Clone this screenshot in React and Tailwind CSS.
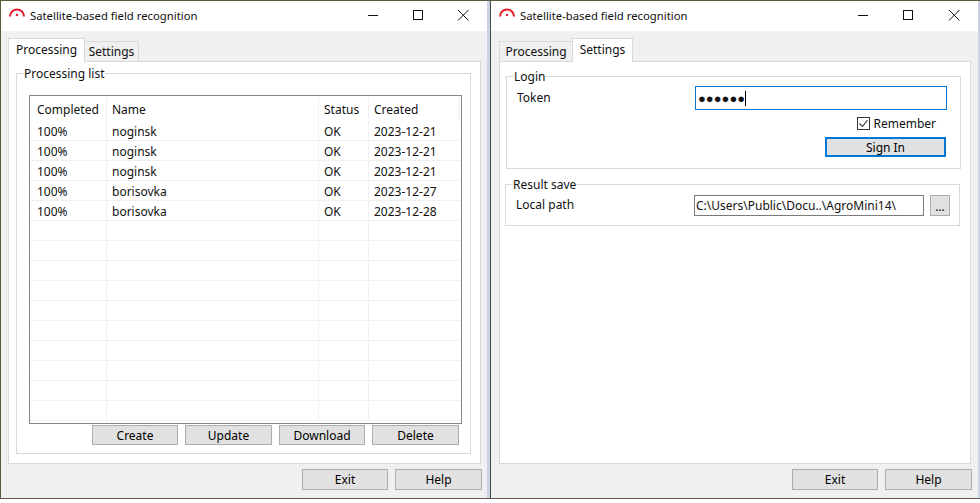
const rows = [
  ['100%', 'noginsk', 'OK', '2023-12-21'],
  ['100%', 'noginsk', 'OK', '2023-12-21'],
  ['100%', 'noginsk', 'OK', '2023-12-21'],
  ['100%', 'borisovka', 'OK', '2023-12-27'],
  ['100%', 'borisovka', 'OK', '2023-12-28'],
  ...Array(10).fill(['', '', '', '']),
];

const Btn = ({ children, className = 'border border-[#adadad]' }) => (
  <button className={`flex items-center justify-center bg-[#e1e1e1] text-[#000] ${className}`}>
    {children}
  </button>
);

const TitleBar = ({ maxGap = 'mr-[33px]' }) => (
  <div className="flex h-[30px] shrink-0 items-center bg-white pl-[8px]">
    <svg width="16" height="10" viewBox="0 0 16 10" className="mt-[-6px]" fill="none">
      <path d="M1 8.5 A7 7 0 0 1 15 8.5" stroke="#e8202c" strokeWidth="2" />
      <circle cx="8" cy="7" r="1.2" fill="#e8202c" />
    </svg>
    <span className="ml-[5px] text-[11.3px] text-[#111]">Satellite-based field recognition</span>
    <div className="ml-auto mt-[-2px] flex items-center pr-[18px]">
      <svg width="12" height="12" viewBox="0 0 12 12" className="mr-[33px]" fill="none">
        <path d="M1 6.5h10" stroke="#111" />
      </svg>
      <svg width="12" height="12" viewBox="0 0 12 12" className={maxGap} fill="none">
        <rect x="1.5" y="1.5" width="9" height="9" stroke="#111" />
      </svg>
      <svg width="12" height="12" viewBox="0 0 12 12" fill="none">
        <path d="M1 1l10.5 10.5M11.5 1L1 11.5" stroke="#111" />
      </svg>
    </div>
  </div>
);

const Tabs = ({ active }) => {
  const tab = (label, w) =>
    active === label ? (
      <div className={`relative z-10 mb-[-1px] flex h-[24px] ${w} items-center justify-center border border-b-0 border-[#d9d9d9] bg-white pb-[1px]`}>
        {label}
      </div>
    ) : (
      <div className={`flex h-[20px] ${w} items-center justify-center border border-b-0 border-[#d9d9d9] bg-[#f0f0f0]`}>
        {label}
      </div>
    );
  return (
    <div className="flex h-[23px] items-end">
      {tab('Processing', active === 'Processing' ? 'w-[77px]' : 'w-[73px] border-r-0')}
      {tab('Settings', active === 'Processing' ? 'w-[54px] border-l-0' : 'w-[61px]')}
    </div>
  );
};

const BottomBar = () => (
  <div className="mt-[5px] flex justify-end gap-[7px]">
    <Btn className="h-[21px] w-[86px] border border-[#adadad]">Exit</Btn>
    <Btn className="h-[21px] w-[87px] border border-[#adadad]">Help</Btn>
  </div>
);

const Cell = ({ w, children, last, first, top }) => (
  <div className={`${w} h-full shrink-0 ${top} ${first ? 'pl-[7px]' : 'pl-[5px]'} ${last ? '' : 'border-r border-[#f0f0f0]'}`}>{children}</div>
);

const ProcessingWindow = () => (
  <div className="flex h-[497px] w-[486px] flex-col bg-[#f0f0f0]">
    <TitleBar />
    <div className="flex flex-1 flex-col pl-[7px] pr-[5px] pt-[7px]">
      <Tabs active="Processing" />
      <div className="h-[403px] w-[473px] border border-[#d9d9d9] bg-white pl-[7px] pt-[3px]">
        <fieldset className="h-[389px] w-[455px] border border-[#d9d9d9] pl-[12px]">
          <legend className="ml-[-5px] h-[16px] pt-[1px] leading-[16px]">Processing list</legend>
          <div className="mt-[14px] h-[329px] w-[433px] overflow-hidden border border-[#828790]">
            <div className="flex h-[25px] pt-[1px]">
              <Cell w="w-[77px]" top="pt-[5px]" first>Completed</Cell>
              <Cell w="w-[212px]" top="pt-[5px]">Name</Cell>
              <Cell w="w-[50px]" top="pt-[5px]">Status</Cell>
              <Cell w="w-[91px]" top="pt-[5px]">Created</Cell>
            </div>
            {rows.map((row, i) => (
              <div key={i} className="flex h-[20px] items-center border-b border-[#f0f0f0]">
                <Cell w="w-[77px]" top="pt-[3px]" first>{row[0]}</Cell>
                <Cell w="w-[212px]" top="pt-[3px]">{row[1]}</Cell>
                <Cell w="w-[50px]" top="pt-[3px]">{row[2]}</Cell>
                <Cell w="w-[91px]" top="pt-[3px]" last>{row[3]}</Cell>
              </div>
            ))}
          </div>
          <div className="mt-[1px] flex h-[20px] gap-[7px] pl-[63px]">
            <Btn className="w-[86px] border border-[#adadad] pt-[1px]">Create</Btn>
            <Btn className="w-[87px] border border-[#adadad] pt-[1px]">Update</Btn>
            <Btn className="w-[86px] border border-[#adadad] pt-[1px]">Download</Btn>
            <Btn className="w-[87px] border border-[#adadad] pt-[1px]">Delete</Btn>
          </div>
        </fieldset>
      </div>
      <BottomBar />
    </div>
  </div>
);

const SettingsWindow = () => (
  <div className="flex h-[497px] w-[487px] flex-col bg-[#f0f0f0]">
    <TitleBar maxGap="mr-[34px]" />
    <div className="flex flex-1 flex-col pl-[8px] pr-[6px] pt-[7px]">
      <Tabs active="Settings" />
      <div className="h-[403px] w-[472px] border border-[#d9d9d9] bg-white pl-[6px] pt-[6px]">
        <fieldset className="h-[101px] w-[455px] border border-[#d9d9d9]">
          <legend className="ml-[7px] h-[16px] pt-[1px] leading-[16px]">Login</legend>
          <div className="mt-[2px] flex h-[24px] items-center">
            <span className="ml-[10px]">Token</span>
            <div className="ml-auto mr-[13px] flex h-[24px] w-[252px] items-center border border-[#0078d7] pl-[2px] text-[13px]">
              ●●●●●●
              <span className="h-[15px] w-px bg-black" />
            </div>
          </div>
          <div className="mt-[7px] flex h-[13px] items-center justify-end pr-[24px]">
            <span className="flex h-[13px] w-[13px] items-center justify-center border border-[#333] bg-white">
              <svg width="11" height="11" viewBox="0 0 11 11" fill="none">
                <path d="M1.5 5.5l3 3 5-6.5" stroke="#333" strokeWidth="1.1" />
              </svg>
            </span>
            <span className="ml-[3px] pt-[1px]">Remember</span>
          </div>
          <div className="mt-[7px] flex justify-end pr-[14px]">
            <Btn className="h-[20px] w-[121px] border-2 border-[#0078d7] pt-[1px]">Sign In</Btn>
          </div>
        </fieldset>
        <fieldset className="ml-[-1px] mt-[7px] h-[50px] w-[455px] border border-[#d9d9d9]">
          <legend className="ml-[7px] h-[16px] pt-[1px] leading-[16px]">Result save</legend>
          <div className="mt-[3px] flex h-[21px] items-center">
            <span className="mb-[2px] ml-[10px]">Local path</span>
            <div className="ml-auto flex h-[21px] w-[230px] items-center border border-[#7a7a7a] pl-[1px]">
              C:\Users\Public\Docu..\AgroMini14\
            </div>
            <Btn className="ml-[6px] mr-[9px] h-[21px] w-[20px] border border-[#adadad] pt-[3px]">...</Btn>
          </div>
        </fieldset>
      </div>
      <BottomBar />
    </div>
  </div>
);

export default function App() {
  return (
    <div className="h-[503px] w-[980px] overflow-hidden bg-white font-['Noto_Sans',sans-serif] text-[12px] leading-[16px] text-[#111]">
      <div className="h-px bg-[#5a5a3a]" />
      <div className="flex h-[497px]">
        <div className="w-px bg-[#5a5a3a]" />
        <ProcessingWindow />
        <div className="w-[3px] bg-[#c9d3e3]" />
        <div className="w-px bg-[#4a4a3a]" />
        <SettingsWindow />
        <div className="w-[2px] bg-[#c9d3e3]" />
      </div>
      <div className="h-px bg-[#5a5a50]" />
    </div>
  );
}
